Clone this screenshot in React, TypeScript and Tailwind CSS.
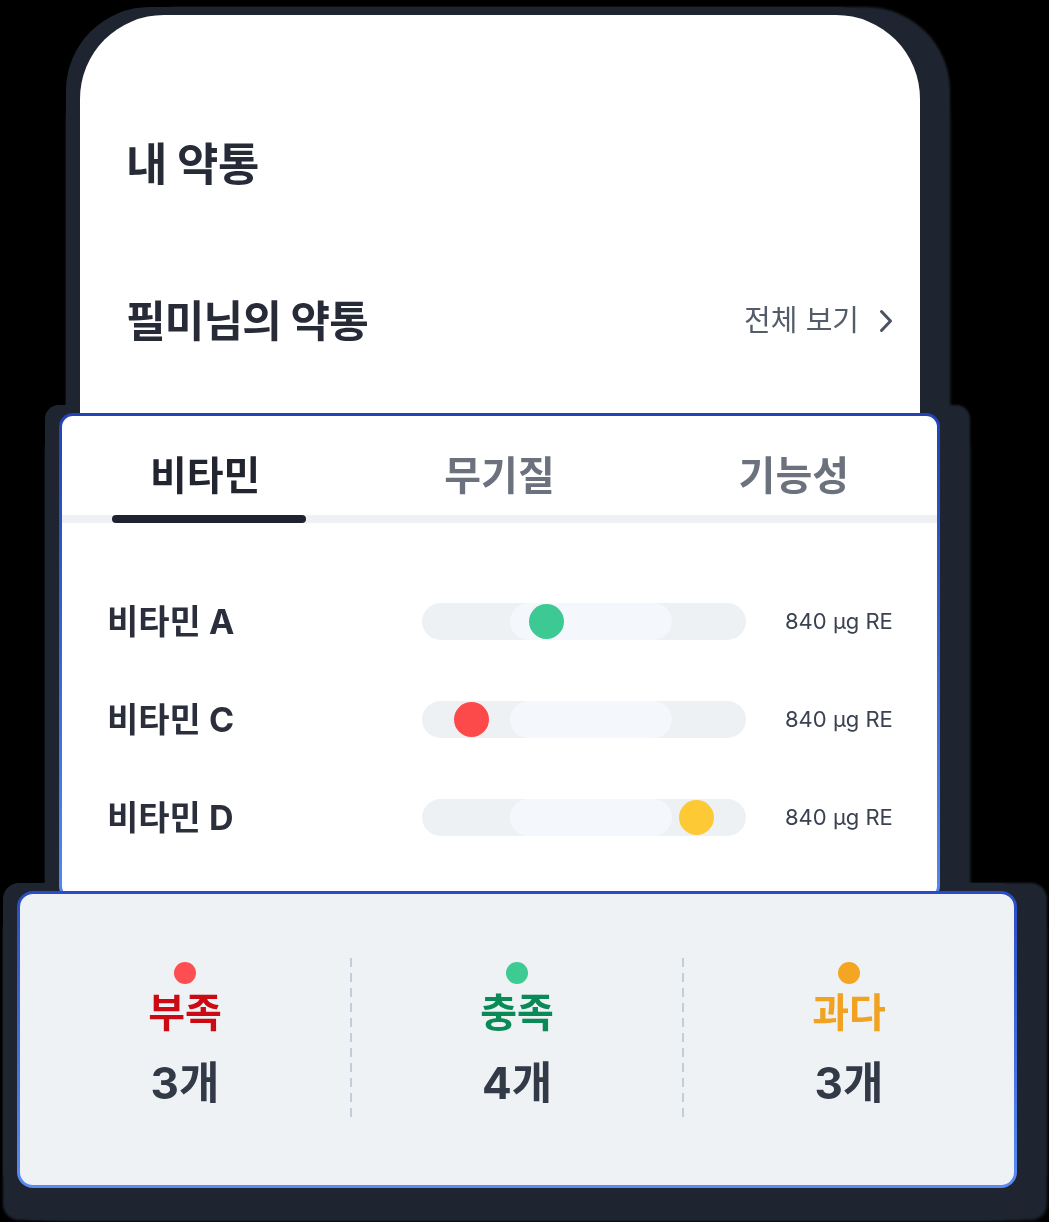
import React from 'react'

const KR = "font-['Inter','Noto_Sans_CJK_KR',sans-serif]"

const tabs = ['비타민', '무기질', '기능성']

const vitamins = [
  { name: '비타민 A', dot: 'bg-[#3cc993]', left: 'left-[107px]' },
  { name: '비타민 C', dot: 'bg-[#fc4a4a]', left: 'left-[32px]' },
  { name: '비타민 D', dot: 'bg-[#fdc935]', left: 'left-[257px]' },
]

const summary = [
  { label: '부족', count: '3개', dot: 'bg-[#fd4f51]', text: 'text-[#cc0a14]' },
  { label: '충족', count: '4개', dot: 'bg-[#3ecb93]', text: 'text-[#0a8a57]' },
  { label: '과다', count: '3개', dot: 'bg-[#f4a623]', text: 'text-[#f0a220]' },
]

const Divider = () => (
  <div className="w-[2px] h-[162px] bg-[repeating-linear-gradient(to_bottom,#c3cdd9_0_9px,transparent_9px_15px)]" />
)

export default function App() {
  return (
    <div className={`w-[1049px] h-[1222px] bg-black overflow-hidden ${KR}`}>
      <div className="pt-[15px] pl-[17px] flex flex-col items-start [filter:drop-shadow(0_-8px_0_#1f2530)_drop-shadow(0_32px_1px_#1f2530)_drop-shadow(-14px_0_0_#1f2530)_drop-shadow(30px_0_1px_#1f2530)]">
        {/* Phone card */}
        <div className="ml-[63px] w-[840px] h-[410px] bg-white rounded-t-[84px] pl-[46px] pr-[27px] pt-[120px]">
          <div className="h-[60px] flex items-center text-[45px] font-bold tracking-[-0.5px] text-[#262b37]">
            내 약통
          </div>
          <div className="mt-[96px] h-[60px] flex items-center justify-between">
            <span className="text-[43px] font-bold tracking-[-0.8px] text-[#262b37]">필미님의 약통</span>
            <span className="flex items-center gap-[20px] text-[29px] text-[#555c69]">
              전체 보기
              <svg width="14" height="24" viewBox="0 0 14 24" fill="none">
                <path d="M2.5 2.5 L11.5 12 L2.5 21.5" stroke="#4b5260" strokeWidth="3" strokeLinecap="round" strokeLinejoin="round" />
              </svg>
            </span>
          </div>
        </div>

        {/* Tab panel */}
        <div className="-mt-[12px] ml-[42px] w-[881px] h-[487px] rounded-[14px] p-[3px] bg-linear-to-b from-[#2143b5] to-[#5487f3]">
          <div className="h-full bg-white rounded-[11px] overflow-hidden">
            <div className="flex justify-between h-[99px] pt-[20px] px-[88px] items-center">
              {tabs.map((t, i) => (
                <div
                  key={t}
                  className={`text-[40px] font-bold ${i === 0 ? 'text-[#22252f]' : 'text-[#6c727d]'}`}
                >
                  {t}
                </div>
              ))}
            </div>
            <div className="h-[8px] bg-[#eef0f3]">
              <div className="ml-[50px] w-[194px] h-full rounded-full bg-[#1f2230]" />
            </div>
            <div className="pt-[49px] pl-[45px]">
              {vitamins.map((v) => (
                <div key={v.name} className="h-[98px] flex items-center">
                  <div className="w-[315px] text-[34px] font-bold text-[#2a2f3b]">{v.name}</div>
                  <div className="relative w-[324px] h-[37px] rounded-full bg-[#eef1f4]">
                    <div className="absolute left-[88px] top-0 w-[162px] h-full rounded-full bg-[#f4f7fb]" />
                    <div className={`absolute top-[1px] ${v.left} w-[35px] h-[35px] rounded-full ${v.dot}`} />
                  </div>
                  <div className="ml-[39px] text-[22px] text-[#3a4150]">840 µg RE</div>
                </div>
              ))}
            </div>
          </div>
        </div>

        {/* Summary */}
        <div className="-mt-[9px] w-[1000px] h-[297px] rounded-[16px] p-[3px] bg-linear-to-b from-[#2a4cc2] to-[#5a8bf4]">
          <div className="h-full bg-[#eef2f5] rounded-[13px] flex items-start pt-[64px]">
            {summary.map((s, i) => (
              <React.Fragment key={s.label}>
                {i > 0 && <Divider />}
                <div className="flex-1 flex flex-col items-center">
                  <div className={`mt-[4px] w-[22px] h-[22px] rounded-full ${s.dot}`} />
                  <div className={`mt-[3px] text-[40px] font-bold leading-[52px] ${s.text}`}>{s.label}</div>
                  <div className="mt-[16px] text-[44px] font-bold leading-[56px] text-[#333a47]">{s.count}</div>
                </div>
              </React.Fragment>
            ))}
          </div>
        </div>
      </div>
    </div>
  )
}
